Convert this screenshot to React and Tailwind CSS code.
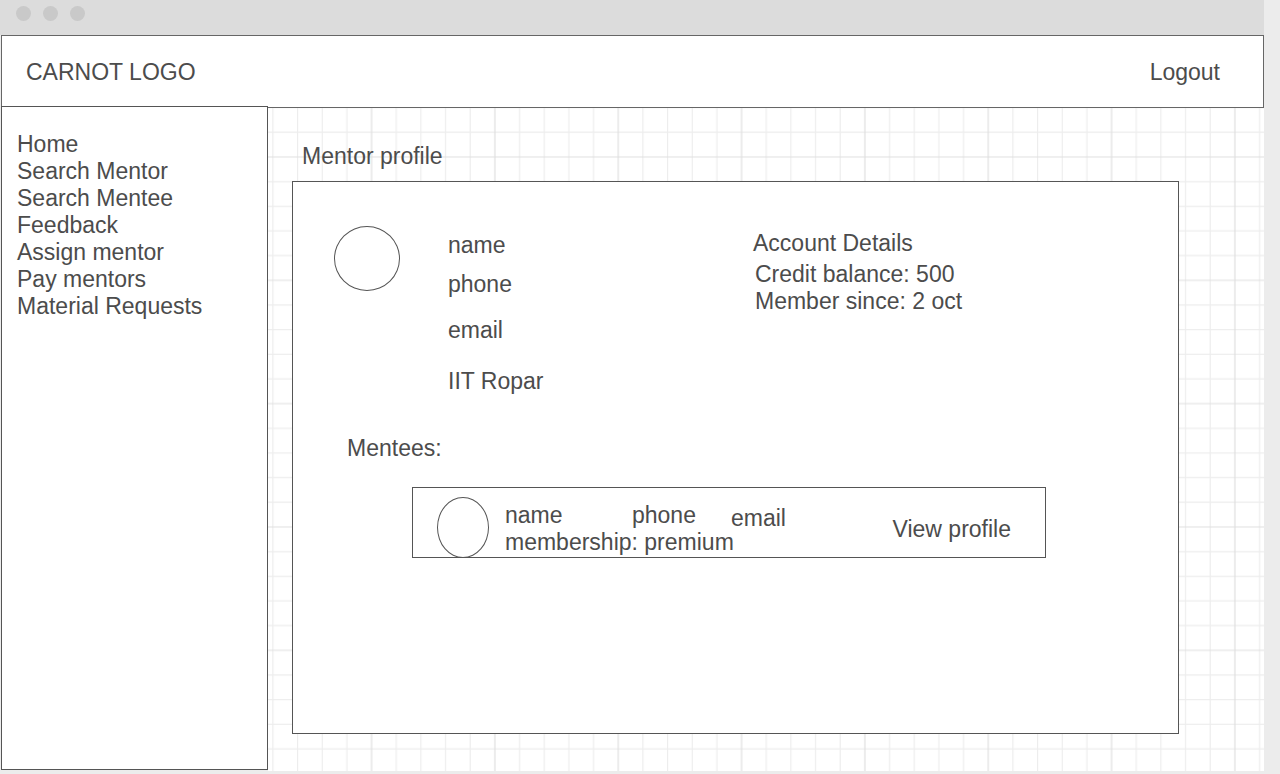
import React from "react";

const navItems = [
  "Home",
  "Search Mentor",
  "Search Mentee",
  "Feedback",
  "Assign mentor",
  "Pay mentors",
  "Material Requests",
];

const CELL = 370 / 3;
const STEP = CELL / 5;

function GridPaper() {
  return (
    <svg aria-hidden="true" className="col-start-1 row-start-1 h-full w-full bg-white">
      <defs>
        <pattern id="grid" x="41.9" y="-12.7" width={CELL} height={CELL} patternUnits="userSpaceOnUse">
          {[0, 1, 3, 4].map((k) => (
            <g key={k} stroke="#ededed" strokeWidth="1.2">
              <line x1={STEP * (k + 0.5)} x2={STEP * (k + 0.5)} y1="0" y2={CELL} />
              <line y1={STEP * (k + 0.5)} y2={STEP * (k + 0.5)} x1="0" x2={CELL} />
            </g>
          ))}
          <g stroke="#dfdfdf" strokeWidth="1.2">
            <line x1={CELL / 2} x2={CELL / 2} y1="0" y2={CELL} />
            <line y1={CELL / 2} y2={CELL / 2} x1="0" x2={CELL} />
          </g>
        </pattern>
      </defs>
      <rect width="100%" height="100%" fill="url(#grid)" />
    </svg>
  );
}

function TitleBar() {
  return (
    <div className="flex h-[35px] gap-3 bg-[#dcdcdc] pt-[6px] pl-4">
      <span className="size-[15px] rounded-full bg-[#c9c9c9]" />
      <span className="size-[15px] rounded-full bg-[#c9c9c9]" />
      <span className="size-[15px] rounded-full bg-[#c9c9c9]" />
    </div>
  );
}

function MenteeRow() {
  return (
    <article className="mr-[132px] ml-[119px] flex h-[71px] border border-[#555] pr-[34px] pl-6">
      <div className="mt-[9px] h-[61px] w-[52px] shrink-0 rounded-[50%] border border-[#555]" />
      <div className="ml-4 pt-[14px]">
        <div className="flex">
          <span className="w-[127px]">name</span>
          <span className="w-[99px]">phone</span>
          <span className="h-[27px] pt-[3px]">email</span>
        </div>
        <p>membership: premium</p>
      </div>
      <a href="#profile" className="mt-[28px] ml-auto whitespace-nowrap">
        View profile
      </a>
    </article>
  );
}

export default function App() {
  return (
    <div className="flex min-h-screen flex-col bg-[#ececec] pr-4 pb-[3px] font-['Liberation_Sans',Arial,sans-serif] text-[23px] leading-[27px] text-[#4c4c4c]">
      <TitleBar />
      <header className="ml-px flex h-[73px] items-center justify-between border border-[#666] bg-white pt-[2px] pr-[43px] pl-6">
        <span>CARNOT LOGO</span>
        <button type="button">Logout</button>
      </header>
      <div className="flex flex-1">
        <nav className="z-10 -mt-[2px] mb-px ml-px w-[267px] shrink-0 border border-[#555] bg-white pt-6 pl-[15px]">
          <ul>
            {navItems.map((item) => (
              <li key={item}>
                <a href="#nav">{item}</a>
              </li>
            ))}
          </ul>
        </nav>
        <main className="grid flex-1">
          <GridPaper />
          <div className="z-10 col-start-1 row-start-1 flex flex-col pt-[35px] pr-[85px] pb-[37px] pl-6">
            <h1 className="pl-[10px]">Mentor profile</h1>
            <section className="mt-[11px] flex-1 border border-[#555] bg-white pt-11">
              <div className="flex pl-[41px]">
                <div className="h-[65px] w-[66px] shrink-0 rounded-[50%] border border-[#555]" />
                <div className="ml-12 w-[305px] shrink-0 pt-[6px]">
                  <p className="mb-3">name</p>
                  <p className="mb-[19px]">phone</p>
                  <p className="mb-6">email</p>
                  <p>IIT Ropar</p>
                </div>
                <div className="pt-1">
                  <h2 className="mb-1">Account Details</h2>
                  <p className="pl-[2px]">Credit balance: 500</p>
                  <p className="pl-[2px]">Member since: 2 oct</p>
                </div>
              </div>
              <h2 className="mt-10 mb-[25px] pl-[54px]">Mentees:</h2>
              <MenteeRow />
            </section>
          </div>
        </main>
      </div>
    </div>
  );
}
